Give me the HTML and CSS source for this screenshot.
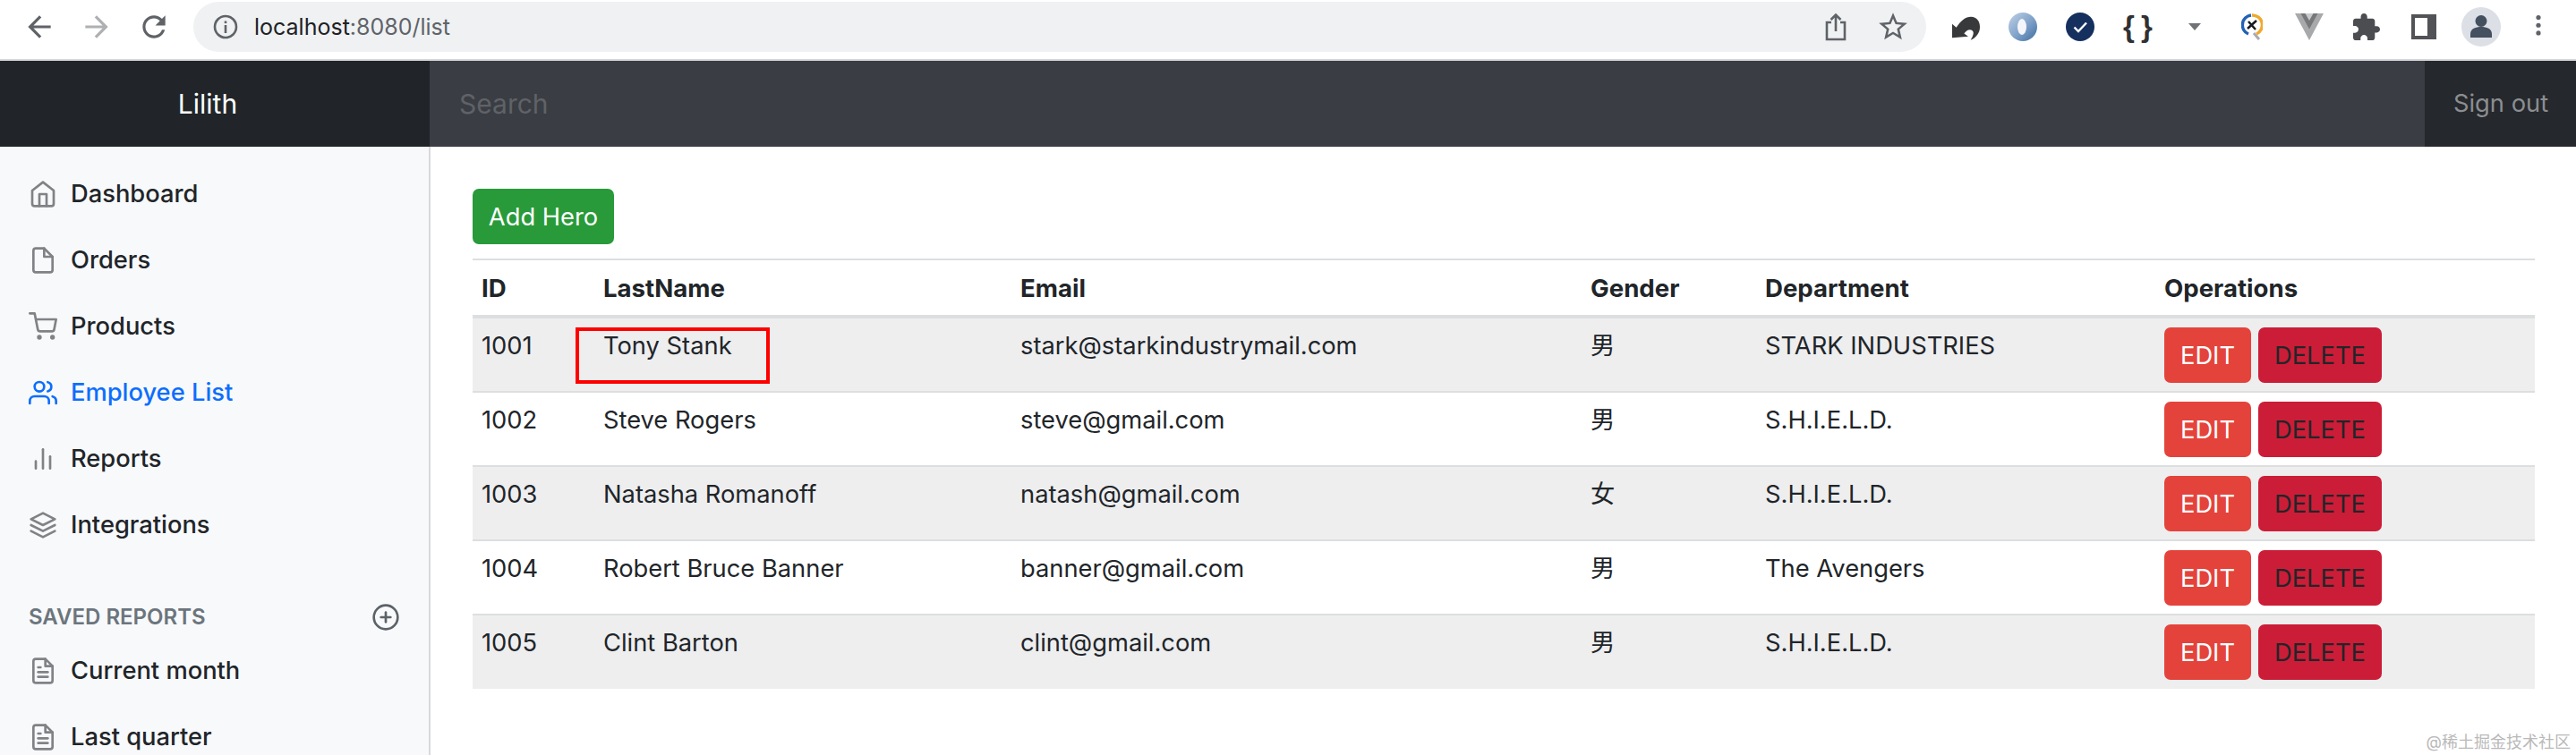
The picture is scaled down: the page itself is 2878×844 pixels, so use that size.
FILE: index.html
```html
<!DOCTYPE html>
<html lang="en">
<head>
    <meta charset="UTF-8">
    <meta name="viewport" content="width=device-width, initial-scale=1.0">
    <title>Employee List</title>
    <link rel="stylesheet" href="styles.css">
</head>
<body>
    <div class="toolbar">
        <div class="nav-buttons">
            <span class="slot"><svg class="chrome-icon" viewBox="0 0 24 24"><path d="M20 11H7.83l5.59-5.59L12 4l-8 8 8 8 1.41-1.41L7.83 13H20v-2z"/></svg></span>
            <span class="slot faded"><svg class="chrome-icon" viewBox="0 0 24 24"><path d="M4 11h12.17l-5.59-5.59L12 4l8 8-8 8-1.41-1.41L16.17 13H4v-2z"/></svg></span>
            <span class="slot"><svg class="chrome-icon" viewBox="0 0 24 24"><path d="M17.65 6.35C16.2 4.9 14.21 4 12 4c-4.42 0-7.99 3.58-7.99 8s3.57 8 7.99 8c3.73 0 6.84-2.55 7.73-6h-2.08c-.82 2.33-3.04 4-5.65 4-3.31 0-6-2.69-6-6s2.69-6 6-6c1.66 0 3.14.69 4.22 1.78L13 11h7V4l-2.35 2.35z"/></svg></span>
        </div>
        <div class="omnibox">
            <svg class="info-icon" viewBox="0 0 28 28"><circle cx="14" cy="14" r="12" fill="none" stroke="#5f6368" stroke-width="2.6"/><rect x="12.7" y="12" width="2.6" height="9" fill="#5f6368"/><rect x="12.7" y="7.5" width="2.6" height="2.6" fill="#5f6368"/></svg>
            <div class="url"><span class="host">localhost</span>:8080/list</div>
            <span class="slot"><svg class="share-icon" viewBox="0 0 26 32"><path d="M8 11H3v19h20V11h-5M13 21V3M7.5 8L13 2.5 18.500 8" fill="none" stroke="#5f6368" stroke-width="2.6"/></svg></span>
            <span class="slot"><svg class="chrome-icon" viewBox="0 0 24 24"><path d="M22 9.240l-7.190-.62L12 2 9.190 8.630 2 9.240l5.460 4.730L5.820 21 12 17.270 18.180 21l-1.630-7.030L22 9.240zM12 15.400l-3.760 2.270 1-4.280-3.320-2.880 4.380-.38L12 6.100l1.710 4.040 4.380.38-3.320 2.880 1 4.280L12 15.400z"/></svg></span>
        </div>
        <div class="extensions">
            <span class="slot"><svg class="ext-reply" viewBox="0 0 93 80"><path d="M0 72V26l14 12C28 16 45 2 63 2c20 0 30 16 30 34 0 20-13 36-31 44 8-14 14-26 4-33-10-5-20 3-26 11l14 10z" fill="#38393b"/></svg></span>
            <span class="slot"><svg class="ext-ring" viewBox="0 0 32 32">
                <defs><linearGradient id="ring" x1="0" y1="0" x2="1" y2="1"><stop offset="0" stop-color="#c0d2e6"/><stop offset="0.55" stop-color="#7ea0c8"/><stop offset="1" stop-color="#3f6c9f"/></linearGradient></defs>
                <circle cx="16" cy="16" r="16" fill="url(#ring)"/><ellipse cx="15" cy="16" rx="5" ry="9" fill="#f4f6f9"/></svg></span>
            <span class="slot"><svg class="ext-check" viewBox="0 0 32 32"><circle cx="16" cy="16" r="16" fill="#15305e"/><path d="M9.500 16.500l4.500 4.500 9-9.500" fill="none" stroke="#fff" stroke-width="2.400"/></svg></span>
            <span class="slot"><span class="braces">{ }</span></span>
            <span class="slot"><svg class="ext-caret" viewBox="0 0 14 8"><path d="M0 0h14L7 8z" fill="#707275"/></svg></span>
            <span class="slot"><svg class="ext-color" viewBox="0 0 24 30"><path d="M12 2a11 11 0 0 1 5 21" fill="none" stroke="#f0a92e" stroke-width="3.500"/><path d="M8 23A11 11 0 0 1 11 2" fill="none" stroke="#2460b4" stroke-width="3.500"/><path d="M14 22l6 7" stroke="#a8acb2" stroke-width="3"/><path d="M7 17L17 8M8 9l8 9" stroke="#15181c" stroke-width="2.500"/></svg></span>
            <span class="slot"><svg class="ext-vue" viewBox="0 0 32 30"><path d="M0 0h32L16 30z" fill="#a8a9ab"/><path d="M6.500 0h19L16 17.500z" fill="#77787a"/><path d="M11.500 0h9L16 8z" fill="#c9cacb"/></svg></span>
            <span class="slot"><svg class="ext-puzzle" viewBox="2 1 21 21"><path d="M20.500 11H19V7c0-1.100-.9-2-2-2h-4V3.500C13 2.120 11.880 1 10.500 1S8 2.120 8 3.500V5H4c-1.100 0-1.990.9-1.990 2v3.800H3.500c1.490 0 2.700 1.210 2.700 2.700s-1.210 2.700-2.700 2.700H2V20c0 1.100.9 2 2 2h3.800v-1.500c0-1.490 1.210-2.700 2.700-2.700 1.490 0 2.700 1.210 2.700 2.700V22H17c1.100 0 2-.9 2-2v-4h1.500c1.380 0 2.500-1.120 2.500-2.500S21.880 11 20.500 11z" fill="#4b4d50"/></svg></span>
            <span class="slot"><svg class="ext-panel" viewBox="0 0 28 28"><path d="M0 0h28v28H0zM4 4v20h14V4z" fill="#515356" fill-rule="evenodd"/></svg></span>
            <span class="slot"><span class="avatar"><svg viewBox="0 0 44 44"><circle cx="22" cy="15.500" r="6.500" fill="#444f5f"/><path d="M10 34v-4c0-6 6-8 12-8s12 2 12 8v4z" fill="#444f5f"/></svg></span></span>
            <span class="slot"><svg class="ext-kebab" viewBox="0 0 6 30"><circle cx="3" cy="3" r="3" fill="#5f6368"/><circle cx="3" cy="13" r="3" fill="#5f6368"/><circle cx="3" cy="23" r="3" fill="#5f6368"/></svg></span>
        </div>
    </div>

    <header class="navbar">
        <a class="brand">Lilith</a>
        <input class="search" type="text" placeholder="Search">
        <a class="sign-out">Sign out</a>
    </header>

    <div class="main">
        <nav class="sidebar">
            <ul class="side-list">
                <li><svg class="feather" viewBox="0 0 24 24"><path d="M3 9l9-7 9 7v11a2 2 0 0 1-2 2H5a2 2 0 0 1-2-2z"/><polyline points="9 22 9 12 15 12 15 22"/></svg>Dashboard</li>
                <li><svg class="feather" viewBox="0 0 24 24"><path d="M13 2H6a2 2 0 0 0-2 2v16a2 2 0 0 0 2 2h12a2 2 0 0 0 2-2V9z"/><polyline points="13 2 13 9 20 9"/></svg>Orders</li>
                <li><svg class="feather" viewBox="0 0 24 24"><circle cx="9" cy="21" r="1"/><circle cx="20" cy="21" r="1"/><path d="M1 1h4l2.680 13.390a2 2 0 0 0 2 1.610h9.720a2 2 0 0 0 2-1.610L23 6H6"/></svg>Products</li>
                <li class="active"><svg class="feather" viewBox="0 0 24 24"><path d="M17 21v-2a4 4 0 0 0-4-4H5a4 4 0 0 0-4 4v2"/><circle cx="9" cy="7" r="4"/><path d="M23 21v-2a4 4 0 0 0-3-3.870"/><path d="M16 3.130a4 4 0 0 1 0 7.750"/></svg>Employee List</li>
                <li><svg class="feather" viewBox="0 0 24 24"><line x1="18" y1="20" x2="18" y2="10"/><line x1="12" y1="20" x2="12" y2="4"/><line x1="6" y1="20" x2="6" y2="14"/></svg>Reports</li>
                <li><svg class="feather" viewBox="0 0 24 24"><polygon points="12 2 2 7 12 12 22 7 12 2"/><polyline points="2 17 12 22 22 17"/><polyline points="2 12 12 17 22 12"/></svg>Integrations</li>
            </ul>
            <h6 class="side-heading">
                <span>SAVED REPORTS</span>
                <svg class="feather plus" viewBox="0 0 24 24"><circle cx="12" cy="12" r="10"/><line x1="12" y1="8" x2="12" y2="16"/><line x1="8" y1="12" x2="16" y2="12"/></svg>
            </h6>
            <ul class="side-list">
                <li><svg class="feather" viewBox="0 0 24 24"><path d="M14 2H6a2 2 0 0 0-2 2v16a2 2 0 0 0 2 2h12a2 2 0 0 0 2-2V8z"/><polyline points="14 2 14 8 20 8"/><line x1="16" y1="13" x2="8" y2="13"/><line x1="16" y1="17" x2="8" y2="17"/><polyline points="10 9 9 9 8 9"/></svg>Current month</li>
                <li><svg class="feather" viewBox="0 0 24 24"><path d="M14 2H6a2 2 0 0 0-2 2v16a2 2 0 0 0 2 2h12a2 2 0 0 0 2-2V8z"/><polyline points="14 2 14 8 20 8"/><line x1="16" y1="13" x2="8" y2="13"/><line x1="16" y1="17" x2="8" y2="17"/><polyline points="10 9 9 9 8 9"/></svg>Last quarter</li>
            </ul>
        </nav>

        <main class="content">
            <button class="btn btn-add">Add Hero</button>
            <table class="table">
                <colgroup>
                    <col class="col-id"><col class="col-name"><col class="col-email"><col class="col-gender"><col class="col-dept"><col class="col-ops">
                </colgroup>
                <thead>
                    <tr><th>ID</th><th>LastName</th><th>Email</th><th>Gender</th><th>Department</th><th>Operations</th></tr>
                </thead>
                <tbody>
                    <tr>
                        <td>1001</td>
                        <td class="marked">Tony Stank<span class="red-box"></span></td>
                        <td>stark@starkindustrymail.com</td><td>男</td><td>STARK INDUSTRIES</td>
                        <td><button class="btn btn-edit">EDIT</button><button class="btn btn-delete">DELETE</button></td>
                    </tr>
                    <tr>
                        <td>1002</td><td>Steve Rogers</td><td>steve@gmail.com</td><td>男</td><td>S.H.I.E.L.D.</td>
                        <td><button class="btn btn-edit">EDIT</button><button class="btn btn-delete">DELETE</button></td>
                    </tr>
                    <tr>
                        <td>1003</td><td>Natasha Romanoff</td><td>natash@gmail.com</td><td>女</td><td>S.H.I.E.L.D.</td>
                        <td><button class="btn btn-edit">EDIT</button><button class="btn btn-delete">DELETE</button></td>
                    </tr>
                    <tr>
                        <td>1004</td><td>Robert Bruce Banner</td><td>banner@gmail.com</td><td>男</td><td>The Avengers</td>
                        <td><button class="btn btn-edit">EDIT</button><button class="btn btn-delete">DELETE</button></td>
                    </tr>
                    <tr>
                        <td>1005</td><td>Clint Barton</td><td>clint@gmail.com</td><td>男</td><td>S.H.I.E.L.D.</td>
                        <td><button class="btn btn-edit">EDIT</button><button class="btn btn-delete">DELETE</button></td>
                    </tr>
                </tbody>
            </table>
        </main>
    </div>

    <div class="watermark">@稀土掘金技术社区</div>
</body>
</html>
```

FILE: styles.css
```css
* {
    box-sizing: border-box;
}

html, body {
    height: 100%;
}

body {
    margin: 0;
    overflow: hidden;
    font-family: Inter, "Noto Sans CJK SC", sans-serif;
    font-size: 27.3px;
    line-height: 42px;
    color: #212529;
    background-color: #fff;
}

/* browser toolbar */
.toolbar {
    height: 68px;
    display: flex;
    align-items: flex-start;
    padding-left: 12px;
    padding-top: 2px;
    border-bottom: 2px solid #d6d7d9;
}

.nav-buttons, .extensions {
    display: flex;
    height: 56px;
}

.extensions {
    margin-left: 12px;
}

.slot {
    width: 64px;
    height: 56px;
    flex: none;
    display: flex;
    align-items: center;
    justify-content: center;
}

.faded {
    opacity: 0.5;
}

.chrome-icon {
    width: 38px;
    height: 38px;
    fill: #5f6368;
}

.omnibox {
    width: 1936px;
    height: 56px;
    margin-left: 12px;
    display: flex;
    align-items: center;
    padding: 0 5px 0 22px;
    border-radius: 28px;
    background-color: #eff1f3;
}

.info-icon {
    width: 28px;
    height: 28px;
}

.url {
    flex: 1;
    margin-left: 18px;
    font-size: 25px;
    color: #5f6368;
}

.host {
    color: #202124;
}

.share-icon {
    width: 26px;
    height: 32px;
}

.ext-reply {
    width: 31px;
    height: 27px;
    margin-top: 2px;
}

.ext-ring, .ext-check {
    width: 32px;
    height: 32px;
}

.braces {
    font-family: "Liberation Sans", sans-serif;
    font-size: 33px;
    font-weight: bold;
    letter-spacing: -1px;
    color: #2f3134;
}

.ext-caret {
    width: 14px;
    height: 8px;
}

.ext-color {
    width: 24px;
    height: 30px;
}

.ext-vue {
    width: 32px;
    height: 30px;
}

.ext-puzzle {
    width: 30px;
    height: 30px;
}

.ext-panel {
    width: 28px;
    height: 28px;
}

.avatar {
    width: 44px;
    height: 44px;
    border-radius: 50%;
    background-color: #dcdfe5;
}

.avatar svg {
    display: block;
}

.ext-kebab {
    width: 6px;
    height: 26px;
}

/* app navbar */
.navbar {
    height: 96px;
    display: flex;
    background-color: #3a3d43;
}

.brand {
    width: 480px;
    flex: none;
    padding-right: 16px;
    text-align: center;
    font-size: 30px;
    line-height: 96px;
    color: #fff;
    background-color: #212529;
}

.search {
    flex: 1;
    min-width: 0;
    padding: 0 33px;
    border: none;
    outline: none;
    font-family: Inter, sans-serif;
    font-size: 30px;
    color: #fff;
    background: transparent;
}

.search::placeholder {
    color: #5f6267;
}

.sign-out {
    width: 169px;
    flex: none;
    padding-left: 32px;
    line-height: 96px;
    color: #8c8e91;
    background-color: #25282c;
}

/* page body */
.main {
    display: flex;
    height: calc(100% - 164px);
}

.sidebar {
    width: 481px;
    flex: none;
    padding-top: 16px;
    overflow: hidden;
    background-color: #f8f9fb;
    border-right: 2px solid #d8d9db;
}

.side-list {
    list-style: none;
    margin: 0;
    padding: 0;
}

.side-list li {
    height: 74px;
    display: flex;
    align-items: center;
    gap: 15px;
    padding-left: 32px;
    font-weight: 500;
    white-space: nowrap;
}

.side-list li.active {
    color: #0d6efd;
}

.feather {
    width: 32px;
    height: 32px;
    flex: none;
    fill: none;
    stroke: #808285;
    stroke-width: 2;
    stroke-linecap: round;
    stroke-linejoin: round;
}

.active .feather {
    stroke: #0d6efd;
}

.side-heading {
    display: flex;
    align-items: center;
    justify-content: space-between;
    margin: 46px 0 0;
    padding: 0 32px;
    height: 40px;
    font-size: 24px;
    font-weight: 600;
    color: #6c757d;
}

.side-heading + .side-list {
    margin-top: 3px;
}

.feather.plus {
    stroke: #5c6268;
}

.content {
    flex: 1;
    min-width: 0;
    padding: 47px 46px 0 47px;
}

.btn {
    height: 62px;
    padding: 0 18px;
    border: none;
    border-radius: 7px;
    font-family: inherit;
    font-size: 27.3px;
    color: #fff;
}

.btn-add {
    display: block;
    width: 158px;
    padding: 0;
    background-color: #289a3a;
}

.btn-edit {
    width: 97px;
    padding: 0;
    background-color: #e4433c;
}

.btn-delete {
    width: 138px;
    margin-left: 8px;
    padding: 0;
    background-color: #cb1d37;
    color: #212529;
}

.table {
    width: 100%;
    margin-top: 16px;
    border-collapse: collapse;
    table-layout: fixed;
}

.col-id { width: 136px; }
.col-name { width: 466px; }
.col-email { width: 637px; }
.col-gender { width: 195px; }
.col-dept { width: 446px; }

.table th {
    height: 64px;
    padding: 0 10px;
    text-align: left;
    font-size: 27.6px;
    font-weight: 700;
    border-top: 2px solid #dcdee0;
    border-bottom: 4px solid #dcdee0;
}

.table td {
    height: 83px;
    padding: 10px 10px 9px;
    vertical-align: top;
    line-height: 42px;
    border-bottom: 2px solid #dcdee0;
    white-space: nowrap;
}

.table tbody tr:nth-child(odd) {
    background-color: #eeeeef;
}

.table tbody tr:last-child td {
    border-bottom: none;
}

.marked {
    position: relative;
}

.red-box {
    position: absolute;
    left: -21px;
    top: 10px;
    width: 217px;
    height: 63px;
    border: 4px solid #f00;
}

.watermark {
    position: absolute;
    right: 6px;
    bottom: 2px;
    font-size: 18px;
    line-height: 24px;
    color: #b9b9b9;
}
```
